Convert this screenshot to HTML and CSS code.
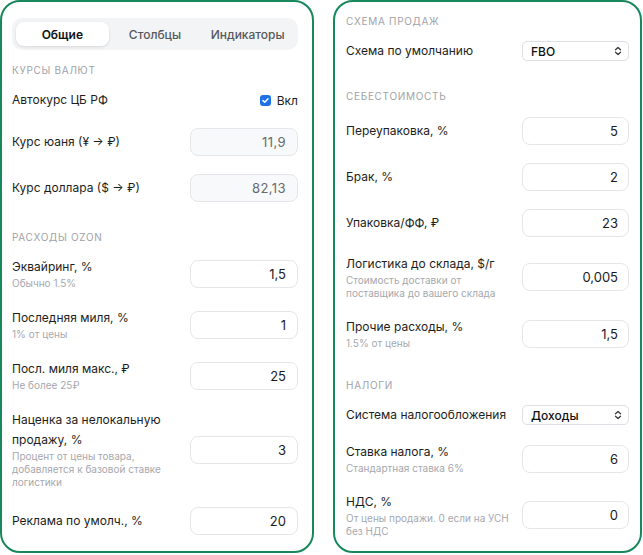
FILE: index.html
```html
<!DOCTYPE html>
<html lang="ru">
<head>
<meta charset="utf-8">
<title>Настройки</title>
<link rel="stylesheet" href="styles.css">
</head>
<body>
<div class="wrap">
  <div class="panel panel-left">
    <div class="tabs">
      <div class="tab active">Общие</div>
      <div class="tab">Столбцы</div>
      <div class="tab">Индикаторы</div>
    </div>

    <div class="section first">
      <div class="sec-title">Курсы валют</div>
      <div class="rows">
        <div class="row row-short">
          <div class="label">Автокурс ЦБ РФ</div>
          <div class="check">
            <span class="box"><svg width="9" height="9" viewBox="0 0 9 9"><path d="M2 4.6 L3.8 6.3 L7 2.8" fill="none" stroke="#fff" stroke-width="1.5" stroke-linecap="round" stroke-linejoin="round"/></svg></span>
            <span>Вкл</span>
          </div>
        </div>
        <div class="row">
          <div class="label">Курс юаня (¥ → ₽)</div>
          <div class="input ro">11,9</div>
        </div>
        <div class="row">
          <div class="label">Курс доллара ($ → ₽)</div>
          <div class="input ro">82,13</div>
        </div>
      </div>
    </div>

    <div class="section">
      <div class="sec-title">Расходы Ozon</div>
      <div class="rows">
        <div class="row">
          <div class="label">Эквайринг, %<div class="hint">Обычно 1.5%</div></div>
          <div class="input">1,5</div>
        </div>
        <div class="row">
          <div class="label">Последняя миля, %<div class="hint">1% от цены</div></div>
          <div class="input">1</div>
        </div>
        <div class="row">
          <div class="label">Посл. миля макс., ₽<div class="hint">Не более 25₽</div></div>
          <div class="input">25</div>
        </div>
        <div class="row">
          <div class="label">Наценка за нелокальную продажу, %<div class="hint">Процент от цены товара, добавляется к базовой ставке логистики</div></div>
          <div class="input">3</div>
        </div>
        <div class="row">
          <div class="label">Реклама по умолч., %</div>
          <div class="input">20</div>
        </div>
      </div>
    </div>
  </div>

  <div class="panel panel-right">
    <div class="section first">
      <div class="sec-title">Схема продаж</div>
      <div class="rows">
        <div class="row row-short">
          <div class="label">Схема по умолчанию</div>
          <div class="select"><span>FBO</span><svg width="8" height="10" viewBox="0 0 8 10"><path d="M1.5 3.8 L4 1.5 L6.5 3.8 M1.5 6.2 L4 8.5 L6.5 6.2" fill="none" stroke="#333" stroke-width="1.2" stroke-linecap="round" stroke-linejoin="round"/></svg></div>
        </div>
      </div>
    </div>

    <div class="section">
      <div class="sec-title">Себестоимость</div>
      <div class="rows">
        <div class="row">
          <div class="label">Переупаковка, %</div>
          <div class="input">5</div>
        </div>
        <div class="row">
          <div class="label">Брак, %</div>
          <div class="input">2</div>
        </div>
        <div class="row">
          <div class="label">Упаковка/ФФ, ₽</div>
          <div class="input">23</div>
        </div>
        <div class="row">
          <div class="label">Логистика до склада, $/г<div class="hint">Стоимость доставки от поставщика до вашего склада</div></div>
          <div class="input">0,005</div>
        </div>
        <div class="row">
          <div class="label">Прочие расходы, %<div class="hint">1.5% от цены</div></div>
          <div class="input">1,5</div>
        </div>
      </div>
    </div>

    <div class="section">
      <div class="sec-title">Налоги</div>
      <div class="rows">
        <div class="row row-short">
          <div class="label">Система налогообложения</div>
          <div class="select"><span>Доходы</span><svg width="8" height="10" viewBox="0 0 8 10"><path d="M1.5 3.8 L4 1.5 L6.5 3.8 M1.5 6.2 L4 8.5 L6.5 6.2" fill="none" stroke="#333" stroke-width="1.2" stroke-linecap="round" stroke-linejoin="round"/></svg></div>
        </div>
        <div class="row">
          <div class="label">Ставка налога, %<div class="hint">Стандартная ставка 6%</div></div>
          <div class="input">6</div>
        </div>
        <div class="row">
          <div class="label">НДС, %<div class="hint">От цены продажи. 0 если на УСН без НДС</div></div>
          <div class="input">0</div>
        </div>
      </div>
    </div>
  </div>
</div>
</body>
</html>
```

FILE: styles.css
```css
* { box-sizing: border-box; }
html, body { margin: 0; padding: 0; background: #fff; }
body {
  font-family: Inter, "Noto Sans", "DejaVu Sans", sans-serif;
  color: #1d1e21;
  font-size: 12px;
}
.wrap {
  display: flex;
  gap: 19px;
  height: 553px;
}
.panel {
  border: 2px solid #17885b;
  border-radius: 20px;
  background: #fff;
}
.panel-left {
  width: 314px;
  padding: 16px 14px 0 10px;
}
.panel-right {
  width: 309px;
  padding: 12px 11px 0 11px;
}
.tabs {
  display: grid;
  grid-template-columns: 1fr 1fr 1fr;
  background: #f3f4f6;
  border-radius: 10px;
  padding: 4px;
  height: 32px;
}
.tab {
  display: flex;
  align-items: center;
  justify-content: center;
  font-size: 12px;
  font-weight: 500;
  color: #55585e;
  border-radius: 8px;
}
.tab.active {
  background: #fff;
  color: #111;
  font-weight: 600;
  box-shadow: 0 1px 3px rgba(0,0,0,0.12);
}
.section { margin-top: 28px; }
.section.first { margin-top: 13px; }
.panel-right .section.first { margin-top: 0; }
.sec-title {
  font-size: 10px;
  line-height: 14px;
  letter-spacing: 0.7px;
  text-transform: uppercase;
  color: #9fa2a8;
  margin-bottom: 13px;
}
.rows {
  display: flex;
  flex-direction: column;
  gap: 18px;
}
.panel-right .rows { gap: 17px; }
.row {
  display: grid;
  grid-template-columns: 1fr 108px;
  column-gap: 14px;
  align-items: center;
  min-height: 28px;
}
.panel-right .row {
  grid-template-columns: 1fr 107px;
  column-gap: 12px;
  min-height: 29px;
}
.panel-left .row.row-short,
.panel-right .row.row-short { min-height: 20px; }
.label {
  font-size: 12px;
  line-height: 20px;
  color: #1d1e21;
}
.hint {
  font-size: 10px;
  line-height: 13px;
  color: #a6a8ae;
}
.input {
  height: 28px;
  border: 1px solid #e4e6ea;
  border-radius: 8px;
  background: #fff;
  display: flex;
  align-items: center;
  justify-content: flex-end;
  padding: 0 11px;
  font-size: 13px;
  color: #1a1b1e;
}
.panel-right .input { padding-right: 10px; }
.input.ro {
  background: #f8f9fa;
  color: #66696f;
  letter-spacing: 0.4px;
}
.check {
  display: flex;
  align-items: center;
  justify-content: flex-end;
  gap: 6px;
  font-size: 12px;
}
.box {
  width: 11px;
  height: 11px;
  border-radius: 3px;
  background: #1e72e6;
  display: flex;
  align-items: center;
  justify-content: center;
}
.select {
  height: 20px;
  border: 1px solid #dde0e4;
  border-radius: 5px;
  background: #fff;
  display: flex;
  align-items: center;
  justify-content: space-between;
  padding: 0 6px 0 8px;
  font-size: 12px;
  font-weight: 500;
  color: #111;
}
```
